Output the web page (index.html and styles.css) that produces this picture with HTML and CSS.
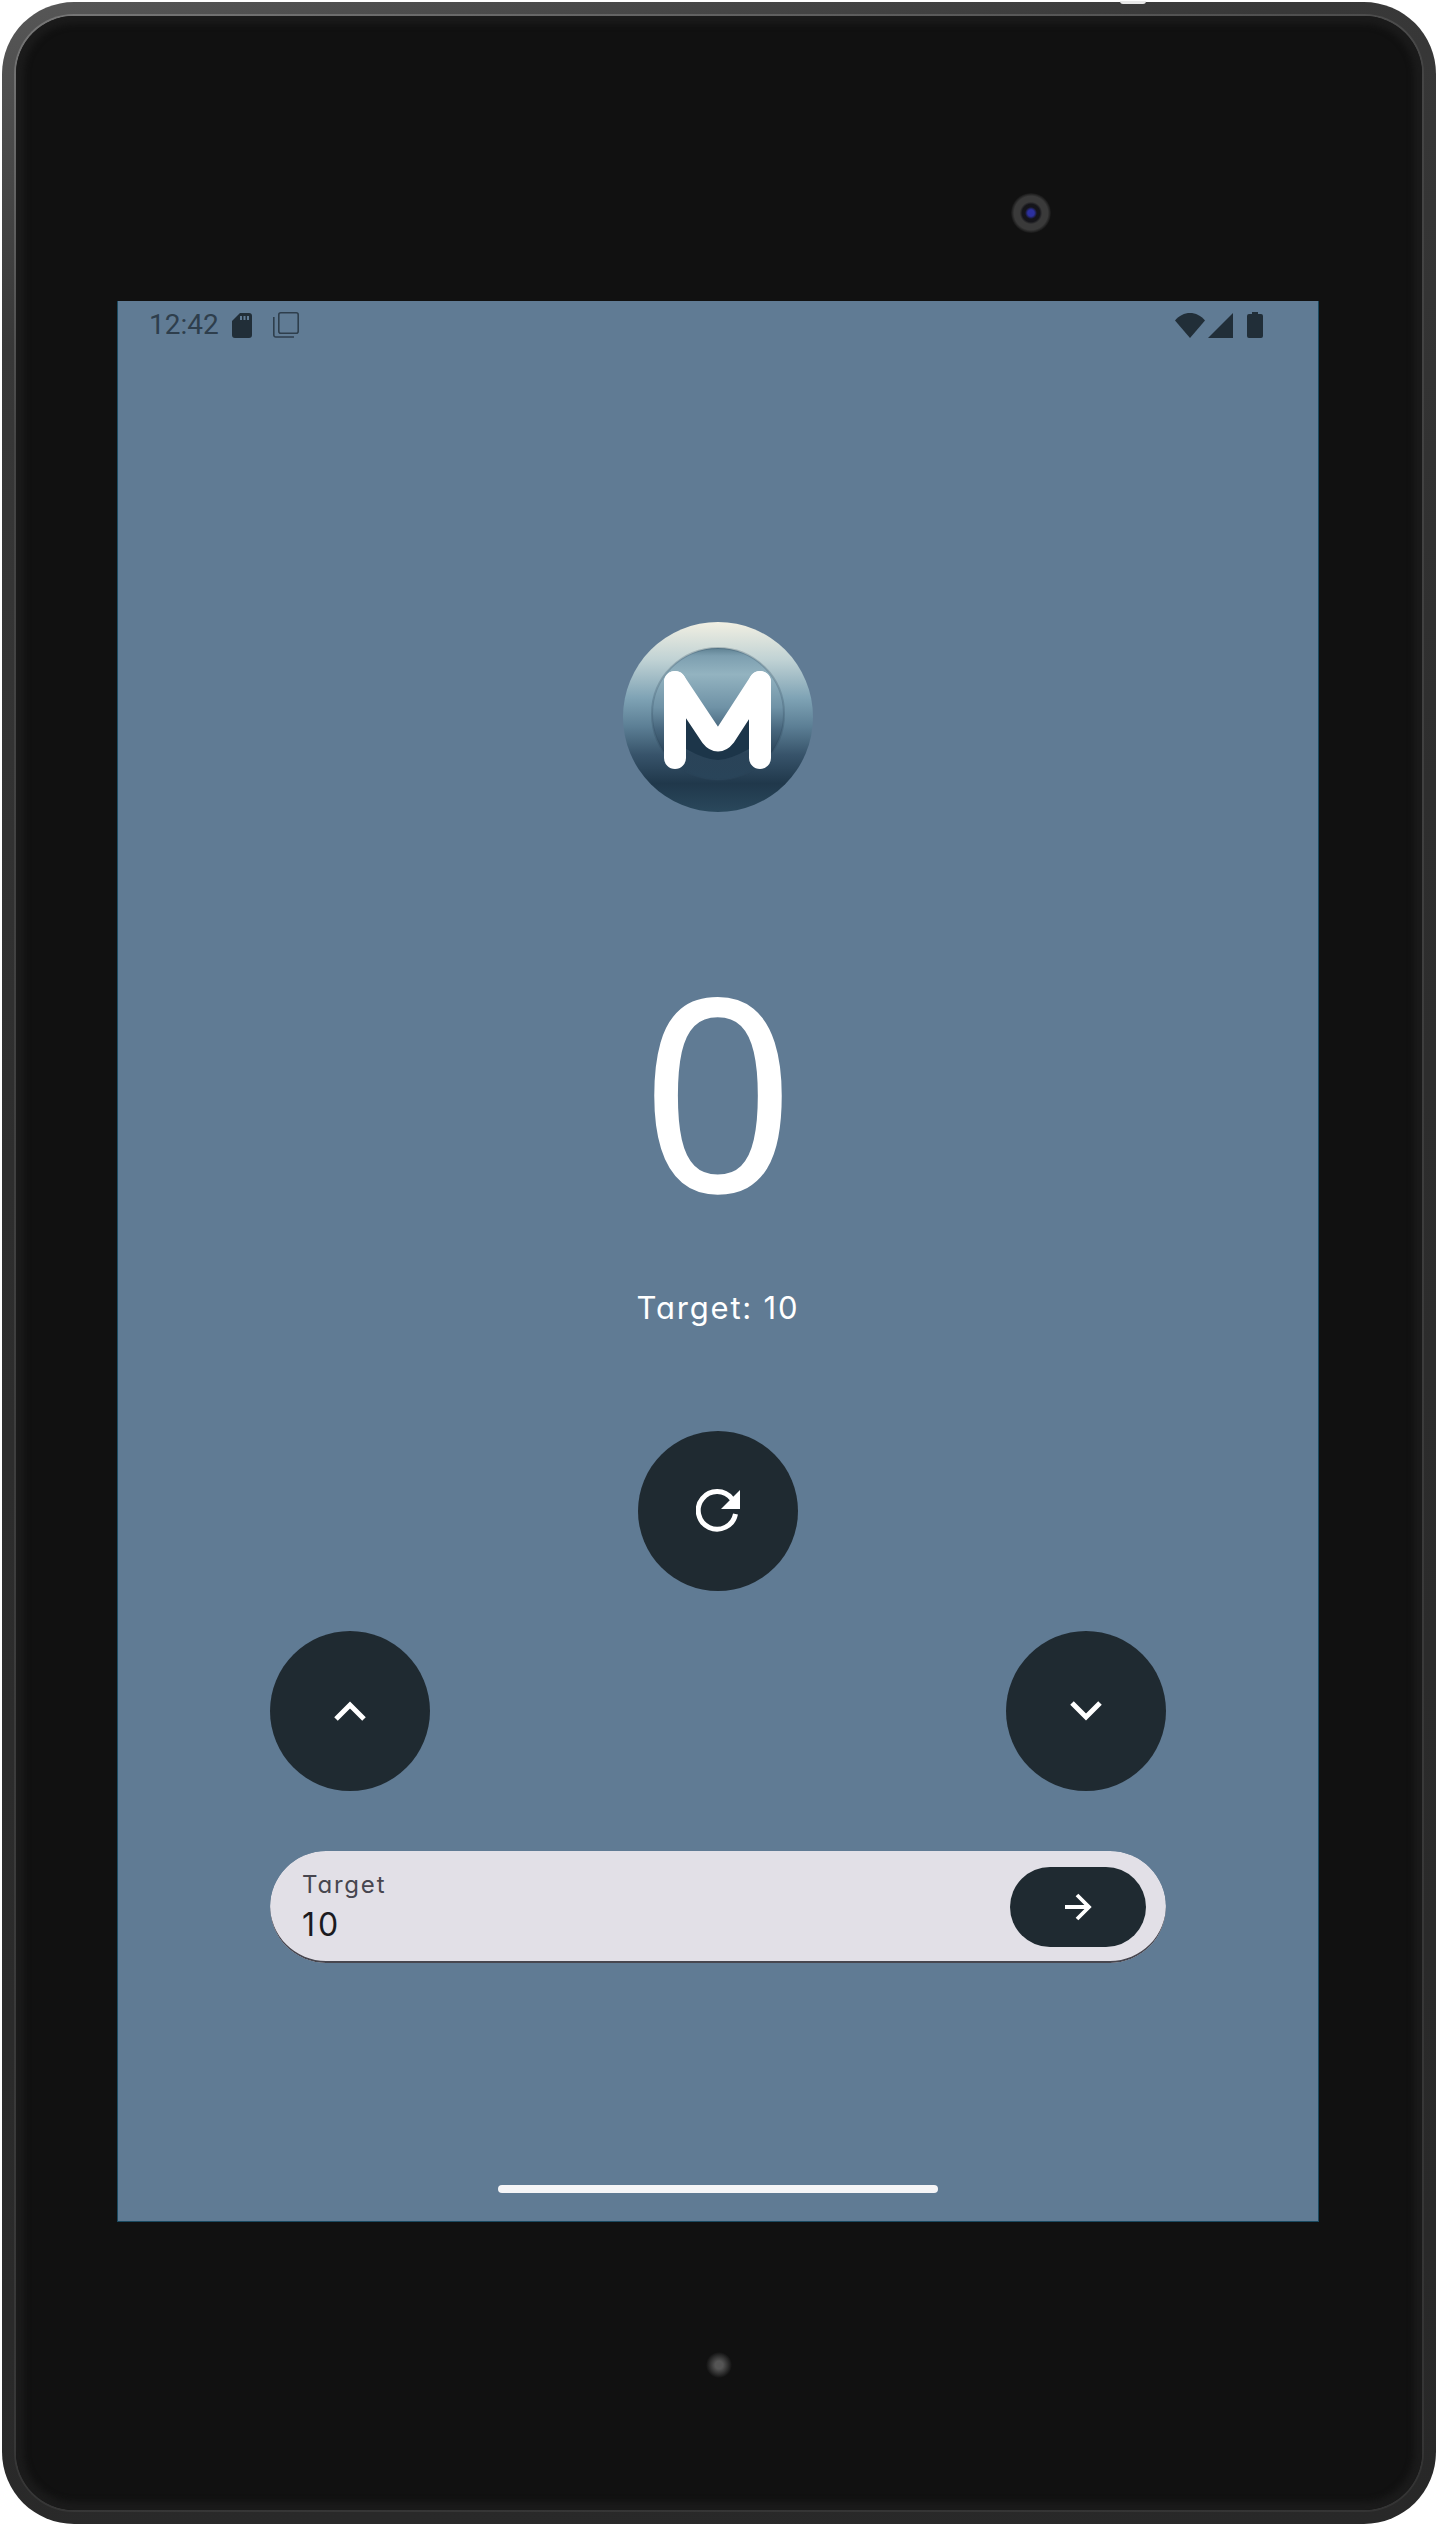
FILE: index.html
```html
<!DOCTYPE html>
<html lang="en">
<head>
<meta charset="utf-8">
<title>Counter</title>
<link rel="stylesheet" href="styles.css">
</head>
<body>
<div class="device">
  <span class="notch"></span>
  <div class="rim">
    <div class="bezel">
      <span class="camera"></span>
      <main class="screen">
        <div class="status">
          <div class="status-left">
            <span class="time">12:42</span>
            <svg class="ic-sd" viewBox="0 0 20 25"><path fill-rule="evenodd" d="M8 0h9a3 3 0 0 1 3 3v19a3 3 0 0 1-3 3H3a3 3 0 0 1-3-3V8zM8 3v4h2V3zM11.500 3v4h2V3zM15 3v4h2V3z"/></svg>
            <svg class="ic-copy" viewBox="0 0 26 26"><rect x="5.800" y="0.800" width="19.400" height="20.400" rx="2" fill="none" stroke="#2e3e4c" stroke-width="1.600"/><path fill="none" stroke="#2e3e4c" stroke-width="1.600" d="M0.800 5v18a2 2 0 0 0 2 2H21"/></svg>
          </div>
          <div class="status-right">
            <svg class="ic-wifi" viewBox="0 0 30 25"><path d="M0 7.500C4 2.500 9.500 0 15 0s11 2.500 15 7.500L15 25z"/></svg>
            <svg class="ic-signal" viewBox="0 0 25 25"><path d="M25 0v25H0z"/></svg>
            <svg class="ic-batt" viewBox="0 0 16 26"><path d="M5 0h6v2h3a2 2 0 0 1 2 2v20a2 2 0 0 1-2 2H2a2 2 0 0 1-2-2V4a2 2 0 0 1 2-2h3z"/></svg>
          </div>
        </div>
        <div class="content">
          <svg class="logo" viewBox="0 0 190 190">
            <defs>
              <linearGradient id="outer" x1="0" y1="0" x2="0" y2="1">
                <stop offset="0" stop-color="#f1efe2"/>
                <stop offset=".2" stop-color="#c0d2d4"/>
                <stop offset=".4" stop-color="#7fa3b5"/>
                <stop offset=".55" stop-color="#5c7f95"/>
                <stop offset=".7" stop-color="#37536a"/>
                <stop offset=".85" stop-color="#20384b"/>
                <stop offset="1" stop-color="#2a485c"/>
              </linearGradient>
              <linearGradient id="inner" x1="0" y1="0" x2="0" y2="1">
                <stop offset="0" stop-color="#5f8192"/>
                <stop offset=".06" stop-color="#7d9fb0"/>
                <stop offset=".2" stop-color="#93b3c0"/>
                <stop offset=".45" stop-color="#6f92a6"/>
                <stop offset=".62" stop-color="#47667d"/>
                <stop offset=".8" stop-color="#2a4358"/>
                <stop offset="1" stop-color="#294459"/>
              </linearGradient>
            </defs>
            <circle cx="95" cy="95" r="95" fill="url(#outer)"/>
            <circle cx="95" cy="92" r="66" fill="url(#inner)" stroke="#2a4358" stroke-opacity=".25" stroke-width="2"/>
            <path d="M63 85l32 40 31-40v42q-20 11-31 11-12 0-32-11z" fill="#1c3549"/>
            <path d="M52 60v76M137 60v76" fill="none" stroke="#fff" stroke-width="22" stroke-linecap="round"/>
            <path d="M52 60l36 54q7 9 14 0l35-54" fill="none" stroke="#fff" stroke-width="22" stroke-linejoin="round" stroke-linecap="round"/>
          </svg>
          <div class="count">0</div>
          <p class="target-label">Target: 10</p>
          <button class="fab fab-reset" type="button" aria-label="Reset">
            <svg class="ic-reset" viewBox="0 0 44 44"><path fill="none" stroke="#fff" stroke-width="5" d="M39.500 25A18.800 18.800 0 1 1 36 10"/><path fill="#fff" d="M44 1v19H25z"/></svg>
          </button>
          <div class="fab-row">
            <button class="fab" type="button" aria-label="Increase">
              <svg class="ic-chev" viewBox="0 0 32 20"><path fill="none" stroke="#fff" stroke-width="5" d="M2 18L16 4l14 14"/></svg>
            </button>
            <button class="fab" type="button" aria-label="Decrease">
              <svg class="ic-chev" viewBox="0 0 32 20"><path fill="none" stroke="#fff" stroke-width="5" d="M2 2l14 14L30 2"/></svg>
            </button>
          </div>
          <div class="field">
            <div class="field-text">
              <label class="field-label">Target</label>
              <span class="field-value">10</span>
            </div>
            <button class="send" type="button" aria-label="Submit">
              <svg class="ic-arrow" viewBox="0 0 28 28"><path fill="none" stroke="#fff" stroke-width="3.800" d="M1 14h24M13 2l12 12-12 12"/></svg>
            </button>
          </div>
        </div>
        <div class="home-bar"></div>
      </main>
      <span class="mic"></span>
    </div>
  </div>
</div>
</body>
</html>
```

FILE: styles.css
```css
html, body {
  margin: 0;
  padding: 0;
  background: #fff;
}
body {
  box-sizing: border-box;
  width: 1437px;
  height: 2527px;
  padding: 2px 1px 3px 2px;
  overflow: hidden;
  font-family: "Inter", "Noto Sans", sans-serif;
}
.device {
  position: relative;
  box-sizing: border-box;
  height: 100%;
  padding: 12px;
  border-radius: 72px;
  background: linear-gradient(165deg, #575757 0, #383838 12%, #2e2e2e 40%, #282828 100%);
}
.notch {
  position: absolute;
  left: 1118px;
  top: -1px;
  width: 26px;
  height: 3px;
  border-radius: 0 0 8px 8px;
  background: #e8e8e8;
}
.rim {
  box-sizing: border-box;
  height: 100%;
  padding: 2px;
  border-radius: 60px;
  background: linear-gradient(165deg, #777 0, #454545 15%, #343434 100%);
}
.bezel {
  position: relative;
  box-sizing: border-box;
  height: 100%;
  padding: 285px 103px 0 101px;
  border-radius: 58px;
  background: #111;
  box-shadow: inset 0 0 6px 8px #1b1b1b;
}
.camera {
  position: absolute;
  left: 995px;
  top: 177px;
  width: 40px;
  height: 40px;
  border-radius: 50%;
  background: radial-gradient(closest-side, #2c30a0 0 16%, #15151a 30% 44%, #3a3a3a 56% 84%, #161616 100%);
}
.mic {
  position: absolute;
  left: 690px;
  top: 2336px;
  width: 26px;
  height: 26px;
  border-radius: 50%;
  background: radial-gradient(closest-side, #555 0 30%, #111 100%);
}
.screen {
  box-sizing: border-box;
  height: 1921px;
  display: flex;
  flex-direction: column;
  background: #607b94;
  box-shadow: inset 0 -1px 0 #1a4a60, inset 1px 0 0 #1a4a60, inset -1px 0 0 #1a4a60;
}
.status {
  display: flex;
  justify-content: space-between;
  align-items: center;
  height: 48px;
  padding: 0 56px 0 32px;
  box-sizing: border-box;
}
.status-left, .status-right {
  display: flex;
  align-items: center;
}
.time {
  font-family: "Roboto", sans-serif;
  font-size: 28px;
  line-height: 46px;
  color: #2e3e4c;
}
.ic-sd {
  width: 20px;
  height: 25px;
  margin-left: 13px;
  fill: #212e38;
}
.ic-copy {
  width: 26px;
  height: 26px;
  margin-left: 21px;
}
.ic-wifi {
  width: 30px;
  height: 25px;
  fill: #212e38;
}
.ic-signal {
  width: 25px;
  height: 25px;
  margin-left: 3px;
  fill: #212e38;
}
.ic-batt {
  width: 16px;
  height: 26px;
  margin-left: 14px;
  fill: #212e38;
}
.content {
  flex: 1;
  display: flex;
  flex-direction: column;
  align-items: center;
  padding: 273px 153px 0;
  min-height: 0;
}
.logo {
  display: block;
  width: 190px;
  height: 190px;
  flex: none;
}
.count {
  height: 300px;
  margin-top: 126px;
  font-family: "Noto Sans", sans-serif;
  font-size: 269px;
  line-height: 300px;
  color: #fff;
}
.target-label {
  margin: 48px 0 0;
  font-size: 31px;
  line-height: 44px;
  letter-spacing: 1.8px;
  color: #fff;
  font-feature-settings: "cv11";
}
.fab {
  display: flex;
  align-items: center;
  justify-content: center;
  flex: none;
  width: 160px;
  height: 160px;
  padding: 0;
  border: 0;
  border-radius: 50%;
  background: #1f2a31;
}
.fab-reset {
  margin-top: 101px;
}
.ic-reset {
  width: 44px;
  height: 44px;
}
.ic-chev {
  width: 32px;
  height: 20px;
}
.fab-row {
  align-self: stretch;
  display: flex;
  justify-content: space-between;
  margin-top: 40px;
}
.field {
  align-self: stretch;
  box-sizing: border-box;
  display: flex;
  align-items: center;
  justify-content: space-between;
  height: 112px;
  margin-top: 60px;
  padding: 0 20px 0 32px;
  border-radius: 56px;
  background: #e2e0e7;
  box-shadow: inset 0 -2px 0 #47464f;
  clip-path: inset(0 round 56px);
}
.field-text {
  display: flex;
  flex-direction: column;
}
.field-label {
  font-size: 24px;
  line-height: 36px;
  letter-spacing: 1.8px;
  color: #47464f;
  font-feature-settings: "cv11";
}
.field-value {
  font-size: 32px;
  line-height: 44px;
  letter-spacing: 3px;
  color: #1b1b1f;
}
.send {
  display: flex;
  align-items: center;
  justify-content: center;
  width: 136px;
  height: 80px;
  padding: 0;
  border: 0;
  border-radius: 40px;
  background: #1f2a31;
}
.ic-arrow {
  width: 28px;
  height: 28px;
}
.home-bar {
  flex: none;
  align-self: center;
  width: 440px;
  height: 8px;
  margin-bottom: 29px;
  border-radius: 4px;
  background: #f5f5f7;
}
```
